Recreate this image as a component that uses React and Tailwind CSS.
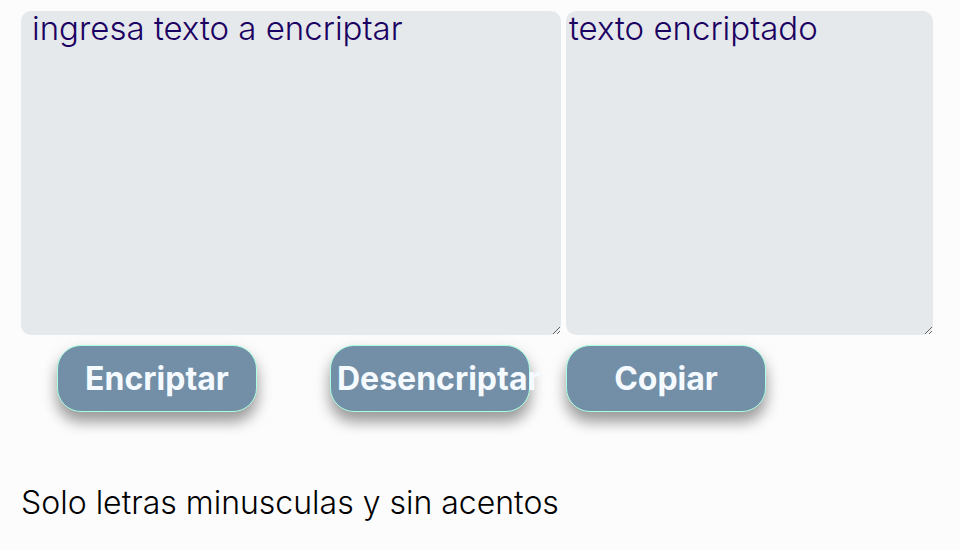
export default function App() {
  const area =
    "block h-[324px] w-full resize rounded-[10px] bg-[#e5e9ec] text-[33px] leading-[34px] font-light text-[#1b0161] placeholder:text-[#1b0161] placeholder:opacity-100 outline-none";
  const button =
    "h-[67px] w-[200px] shrink-0 rounded-[24px] border border-[#a9ffe0] bg-[#728fa7] px-[6px] text-[32px] leading-9 font-bold whitespace-nowrap text-[#f5faff] shadow-[0_10px_14px_rgba(0,0,0,0.35),0_6px_20px_rgba(0,0,0,0.08)]";
  return (
    <main className="min-h-screen bg-[#fcfcfc] pt-[11px] pr-[27px] pl-[21px] font-['Inter',sans-serif]">
      <div className="grid grid-cols-[540fr_367fr] gap-x-[5px] gap-y-[10px]">
        <textarea aria-label="Texto a encriptar" placeholder="ingresa texto a encriptar" className={`${area} pl-[11px]`} />
        <textarea aria-label="Texto encriptado" placeholder="texto encriptado" className={`${area} pl-[3px]`} />
        <div className="flex gap-[73px] pl-[36px]">
          <button type="button" className={button}>Encriptar</button>
          <button type="button" className={`${button} text-left`}>Desencriptar</button>
        </div>
        <div>
          <button type="button" className={button}>Copiar</button>
        </div>
      </div>
      <p className="mt-[71px] text-[32px] leading-10 font-light text-black">Solo letras minusculas y sin acentos</p>
    </main>
  );
}
